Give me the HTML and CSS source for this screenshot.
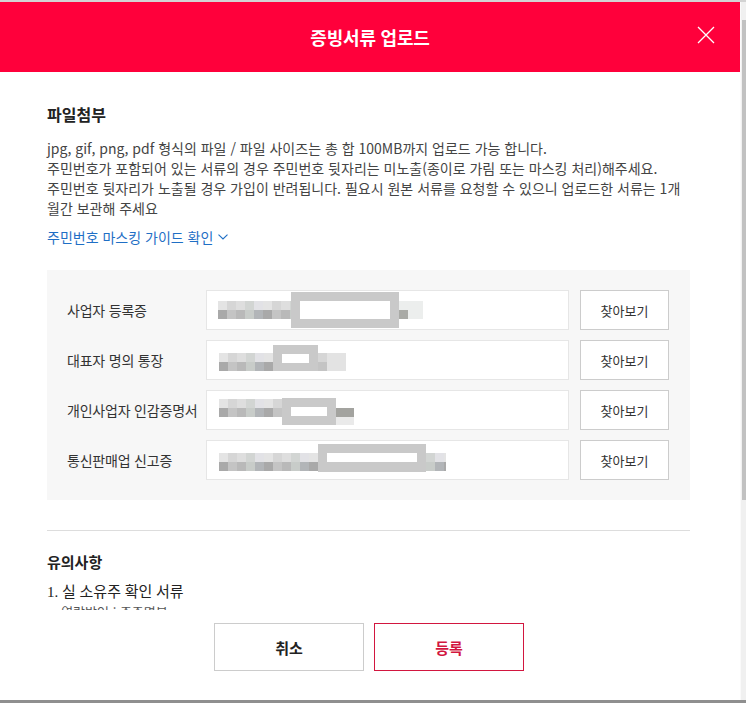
FILE: index.html
```html
<!DOCTYPE html>
<html lang="ko">
<head>
<meta charset="utf-8">
<title>증빙서류 업로드</title>
<link rel="stylesheet" href="styles.css">
</head>
<body>
<svg class="defs" width="0" height="0" aria-hidden="true">
  <defs>
    <pattern id="mos" width="45" height="18" patternUnits="userSpaceOnUse">
      <rect x="0" y="0" width="9" height="9" fill="#e4e4e4"/>
      <rect x="9" y="0" width="9" height="9" fill="#d6d6d6"/>
      <rect x="18" y="0" width="9" height="9" fill="#dedede"/>
      <rect x="27" y="0" width="9" height="9" fill="#d2d5d3"/>
      <rect x="36" y="0" width="9" height="9" fill="#e2e2e6"/>
      <rect x="0" y="9" width="9" height="9" fill="#a9a9a9"/>
      <rect x="9" y="9" width="9" height="9" fill="#c4c4c4"/>
      <rect x="18" y="9" width="9" height="9" fill="#b9b9b9"/>
      <rect x="27" y="9" width="9" height="9" fill="#c8ccc9"/>
      <rect x="36" y="9" width="9" height="9" fill="#b2b5b8"/>
    </pattern>
  </defs>
</svg>
<div class="window">
  <div class="main">
    <header class="header">
      <h1 class="title">증빙서류 업로드</h1>
      <button class="close" aria-label="닫기">
        <svg width="18" height="18" viewBox="0 0 18 18"><path d="M1 1 L17 17 M17 1 L1 17" stroke="#fff" stroke-width="1.3" fill="none"/></svg>
      </button>
    </header>
    <div class="body">
      <h2 class="sec-title">파일첨부</h2>
      <p class="desc">jpg, gif, png, pdf 형식의 파일 / 파일 사이즈는 총 합 100MB까지 업로드 가능 합니다.<br>주민번호가 포함되어 있는 서류의 경우 주민번호 뒷자리는 미노출(종이로 가림 또는 마스킹 처리)해주세요.<br>주민번호 뒷자리가 노출될 경우 가입이 반려됩니다. 필요시 원본 서류를 요청할 수 있으니 업로드한 서류는 1개월간 보관해 주세요</p>
      <a class="guide" href="#">주민번호 마스킹 가이드 확인<svg width="10" height="6" viewBox="0 0 10 6"><path d="M0.5 0.6 L5 5 L9.5 0.6" stroke="#1f6fc5" stroke-width="1.1" fill="none"/></svg></a>

      <div class="upload-box">
        <div class="row">
          <span class="label">사업자 등록증</span>
          <div class="file">
            <svg width="361" height="38" viewBox="0 0 361 38">
              <g transform="translate(11,10)"><rect width="205" height="18" fill="url(#mos)"/></g>
              <rect x="84" y="1" width="108" height="36" fill="#c9c9c9"/>
              <rect x="93" y="10" width="90" height="18" fill="#fff"/>
              <rect x="192" y="10" width="24" height="18" fill="#eceeed"/>
              <rect x="192" y="19" width="9" height="9" fill="#a9aaa6"/>
            </svg>
          </div>
          <button class="find">찾아보기</button>
        </div>
        <div class="row">
          <span class="label">대표자 명의 통장</span>
          <div class="file">
            <svg width="361" height="38" viewBox="0 0 361 38">
              <g transform="translate(12,12)"><rect width="127" height="18" fill="url(#mos)"/></g>
              <rect x="66" y="4" width="45" height="26" fill="#c9c9c9"/>
              <rect x="75" y="13" width="27" height="9" fill="#fff"/>
              <rect x="120" y="12" width="19" height="18" fill="#e3e3e3"/>
            </svg>
          </div>
          <button class="find">찾아보기</button>
        </div>
        <div class="row">
          <span class="label">개인사업자 인감증명서</span>
          <div class="file">
            <svg width="361" height="38" viewBox="0 0 361 38">
              <g transform="translate(12,8)"><rect width="117" height="18" fill="url(#mos)"/></g>
              <rect x="75" y="7" width="54" height="27" fill="#c9c9c9"/>
              <rect x="84" y="16" width="36" height="9" fill="#fff"/>
              <rect x="129" y="17" width="18" height="9" fill="#a3a39f"/>
              <rect x="129" y="26" width="18" height="8" fill="#eaeaea"/>
            </svg>
          </div>
          <button class="find">찾아보기</button>
        </div>
        <div class="row">
          <span class="label">통신판매업 신고증</span>
          <div class="file">
            <svg width="361" height="38" viewBox="0 0 361 38">
              <g transform="translate(12,12)"><rect width="227" height="18" fill="url(#mos)"/></g>
              <rect x="111" y="3" width="108" height="28" fill="#c9c9c9"/>
              <rect x="120" y="12" width="90" height="9" fill="#fff"/>
            </svg>
          </div>
          <button class="find">찾아보기</button>
        </div>
      </div>

      <hr class="divider">

      <h3 class="note-title">유의사항</h3>
      <p class="note-item">1. 실 소유주 확인 서류</p>
      <p class="note-sub">- 열람방언 : 주주명부</p>
    </div>
    <footer class="footer">
      <button class="btn btn-cancel">취소</button>
      <button class="btn btn-submit">등록</button>
    </footer>
  </div>
  <div class="scrollbar"><div class="thumb"></div></div>
</div>
</body>
</html>
```

FILE: styles.css
```css
* { box-sizing: border-box; }
html, body { margin: 0; padding: 0; }
body {
  width: 746px;
  height: 703px;
  overflow: hidden;
  background: #fff;
  font-family: "Noto Sans CJK KR", "Noto Sans", sans-serif;
  color: #333;
}
.defs { position: absolute; width: 0; height: 0; }
.window {
  display: flex;
  width: 746px;
  height: 703px;
  border-top: 2px solid #d3d3d3;
  border-bottom: 3px solid #8f8f8f;
}
.main {
  width: 740px;
  display: flex;
  flex-direction: column;
}
.scrollbar {
  width: 6px;
  background: #f0f0f0;
  border-left: 1px solid #fafafa;
  padding-top: 18px;
}
.thumb {
  margin-left: 1px;
  width: 4px;
  height: 480px;
  background: #c1c1c1;
}
.header {
  height: 70px;
  flex: none;
  background: #ff003b;
  display: flex;
  align-items: center;
  justify-content: center;
  position: relative;
}
.title {
  margin: 0;
  color: #fff;
  font-size: 18px;
  font-weight: 700;
  line-height: 24px;
  letter-spacing: -0.2px;
}
.close {
  position: absolute;
  right: 25px;
  top: 24px;
  width: 18px;
  height: 18px;
  padding: 0;
  border: 0;
  background: none;
}
.close svg { display: block; }
.body {
  height: 538px;
  flex: none;
  overflow: hidden;
  padding: 30px 50px 0 47px;
}
.sec-title {
  margin: 0 0 12px;
  font-size: 16px;
  font-weight: 700;
  line-height: 24px;
  color: #222;
}
.desc {
  margin: 0;
  font-size: 14px;
  line-height: 20px;
  color: #444;
  word-break: break-all;
}
.guide {
  display: flex;
  width: fit-content;
  align-items: center;
  gap: 5px;
  margin-top: 9px;
  height: 20px;
  font-size: 14px;
  line-height: 20px;
  color: #1f6fc5;
  text-decoration: none;
}
.upload-box {
  margin-top: 23px;
  width: 643px;
  background: #f7f7f7;
  padding: 20px 21px 20px 20px;
  display: flex;
  flex-direction: column;
  gap: 10px;
}
.row {
  display: flex;
  align-items: center;
  height: 40px;
}
.label {
  width: 139px;
  font-size: 14px;
  color: #333;
  letter-spacing: -0.2px;
}
.file {
  width: 363px;
  height: 40px;
  background: #fff;
  border: 1px solid #e6e6e6;
}
.file svg { display: block; }
.find {
  margin-left: 11px;
  width: 89px;
  height: 40px;
  border: 1px solid #cccccc;
  background: #fff;
  font-family: inherit;
  font-size: 13px;
  color: #333;
  padding: 0;
}
.divider {
  margin: 30px 0 0;
  width: 643px;
  border: 0;
  border-top: 1px solid #dddddd;
  height: 0;
}
.note-title {
  margin: 20px 0 9px;
  font-size: 15px;
  font-weight: 700;
  line-height: 22px;
  color: #222;
}
.note-item {
  margin: 0;
  font-family: "Liberation Serif", "Noto Sans CJK KR", serif;
  font-size: 15px;
  line-height: 20px;
  color: #222;
}
.note-sub {
  margin: 0;
  padding-left: 6px;
  font-size: 13px;
  line-height: 20px;
  color: #555;
}
.footer {
  height: 90px;
  flex: none;
  display: flex;
  justify-content: center;
  gap: 10px;
  padding-top: 13px;
  padding-right: 2px;
}
.btn {
  width: 150px;
  height: 48px;
  background: #fff;
  font-family: inherit;
  font-size: 15px;
  font-weight: 700;
  padding: 0;
}
.btn-cancel {
  border: 1px solid #cccccc;
  color: #222;
}
.btn-submit {
  border: 1px solid #d2163f;
  color: #d2163f;
}
```
